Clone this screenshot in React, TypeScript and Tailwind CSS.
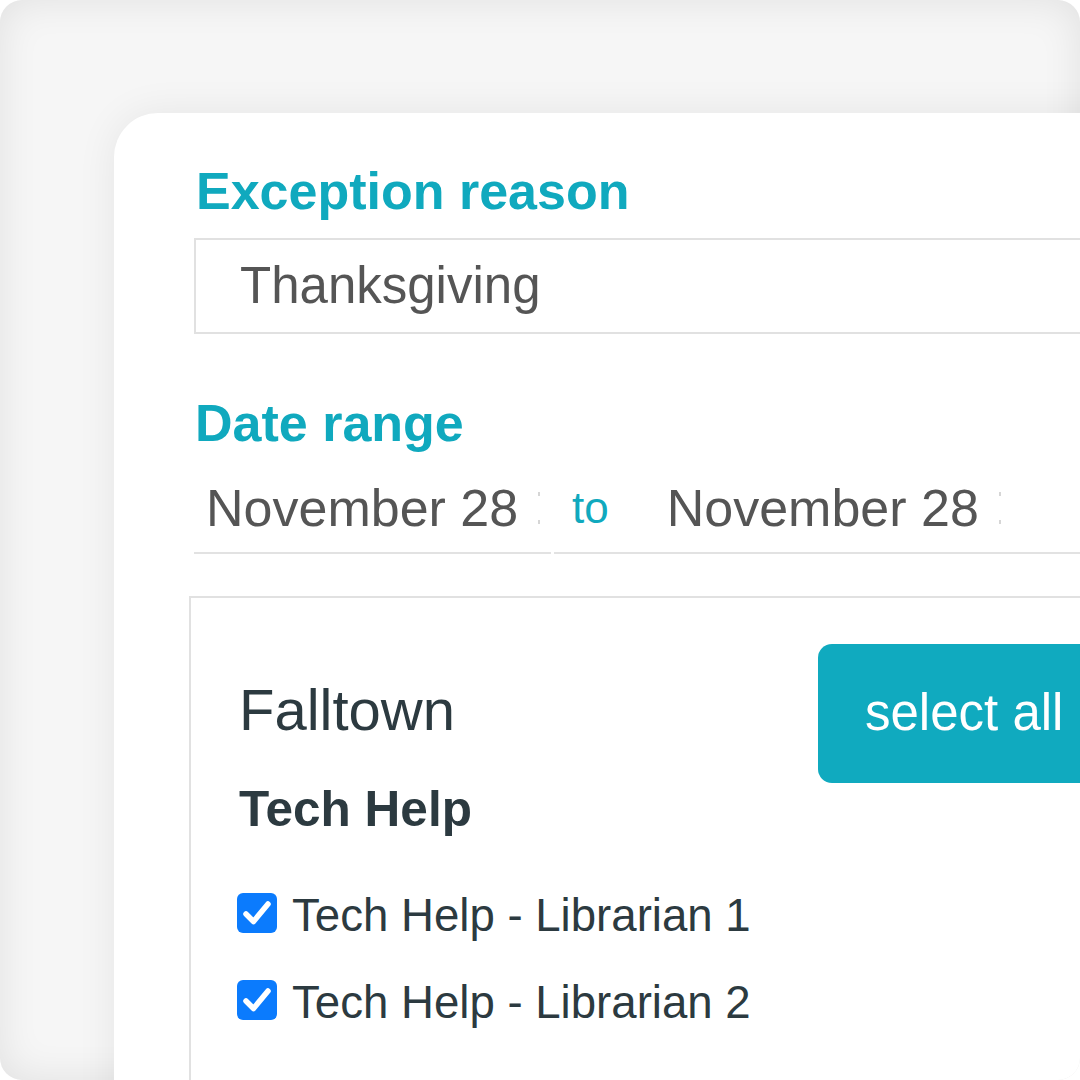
import React from 'react';

const font = { fontFamily: '"Liberation Sans", Arial, sans-serif' };

function Clip() {
  // faint remains of a clipped date picker glyph
  return (
    <span className="ml-[20px] flex h-[32px] w-[2px] flex-col justify-between self-center">
      <span className="h-[4px] w-[2px] bg-[#d6d6d6]" />
      <span className="h-[4px] w-[2px] bg-[#d6d6d6]" />
    </span>
  );
}

function Check({ label }: { label: string }) {
  return (
    <div className="flex h-[87px] items-center gap-[15px]">
      <span className="flex h-[40px] w-[40px] shrink-0 items-center justify-center rounded-[6px] bg-[#0b7bfd]">
        <svg viewBox="0 0 40 40" className="h-[40px] w-[40px]">
          <polyline
            points="9,21 16.5,28.5 31,11"
            fill="none"
            stroke="#ffffff"
            strokeWidth="5.5"
            strokeLinecap="round"
            strokeLinejoin="round"
          />
        </svg>
      </span>
      <span className="pt-[8px] text-[45.6px] text-[#2c3a40]">{label}</span>
    </div>
  );
}

export default function App() {
  return (
    <div className="h-[1080px] w-[1080px] bg-white" style={font}>
      <div className="h-[1080px] w-[1080px] overflow-hidden rounded-[22px] bg-[#f6f6f6] pl-[114px] pt-[113px] shadow-[inset_0_0_40px_rgba(0,0,0,0.09)]">
        <div className="h-[1100px] w-[1100px] rounded-tl-[44px] bg-white pl-[80px] pt-[48px] shadow-[0_0_40px_rgba(0,0,0,0.07)]">
          {/* Exception reason */}
          <div className="pl-[2px] text-[52px] font-bold leading-[60px] text-[#10a9be]">Exception reason</div>
          <div className="mt-[17px] flex h-[96px] w-[1000px] items-center border-2 border-[#e1e1e1] pl-[44px]">
            <span className="text-[51px] text-[#555555]">Thanksgiving</span>
          </div>

          {/* Date range */}
          <div className="mt-[59px] pl-[1px] text-[52px] font-bold leading-[60px] text-[#10a9be]">Date range</div>
          <div className="flex w-[1000px] gap-[3px]">
            <div className="flex w-[357px] border-b-2 border-[#e2e2e2] pb-[14px] pl-[12px] pt-[25px]">
              <span className="text-[52px] leading-[60px] text-[#555555]">November 28</span>
              <Clip />
            </div>
            <div className="flex flex-1 items-center border-b-2 border-[#e2e2e2] pb-[14px] pl-[18px] pt-[25px]">
              <span className="text-[44px] leading-[60px] text-[#10a9be]">to</span>
              <span className="ml-[58px] text-[52px] leading-[60px] text-[#555555]">November 28</span>
              <Clip />
            </div>
          </div>

          {/* Location panel */}
          <div className="ml-[-5px] mt-[42px] h-[600px] w-[1000px] border-2 border-[#e1e1e1] pl-[46px]">
            <div className="flex items-start">
              <div className="w-[581px] pl-[2px] pt-[78px] text-[#2c3a40]">
                <div className="text-[58px] leading-[68px]">Falltown</div>
                <div className="mt-[36px] text-[49.5px] font-bold leading-[58px]">Tech Help</div>
              </div>
              <button className="mt-[46px] flex h-[139px] w-[300px] items-center rounded-[14px] bg-[#10aabf] pl-[47px] text-[51px] text-white">
                select all
              </button>
            </div>
            <div className="mt-[31px]">
              <Check label="Tech Help - Librarian 1" />
              <Check label="Tech Help - Librarian 2" />
            </div>
          </div>
        </div>
      </div>
    </div>
  );
}
